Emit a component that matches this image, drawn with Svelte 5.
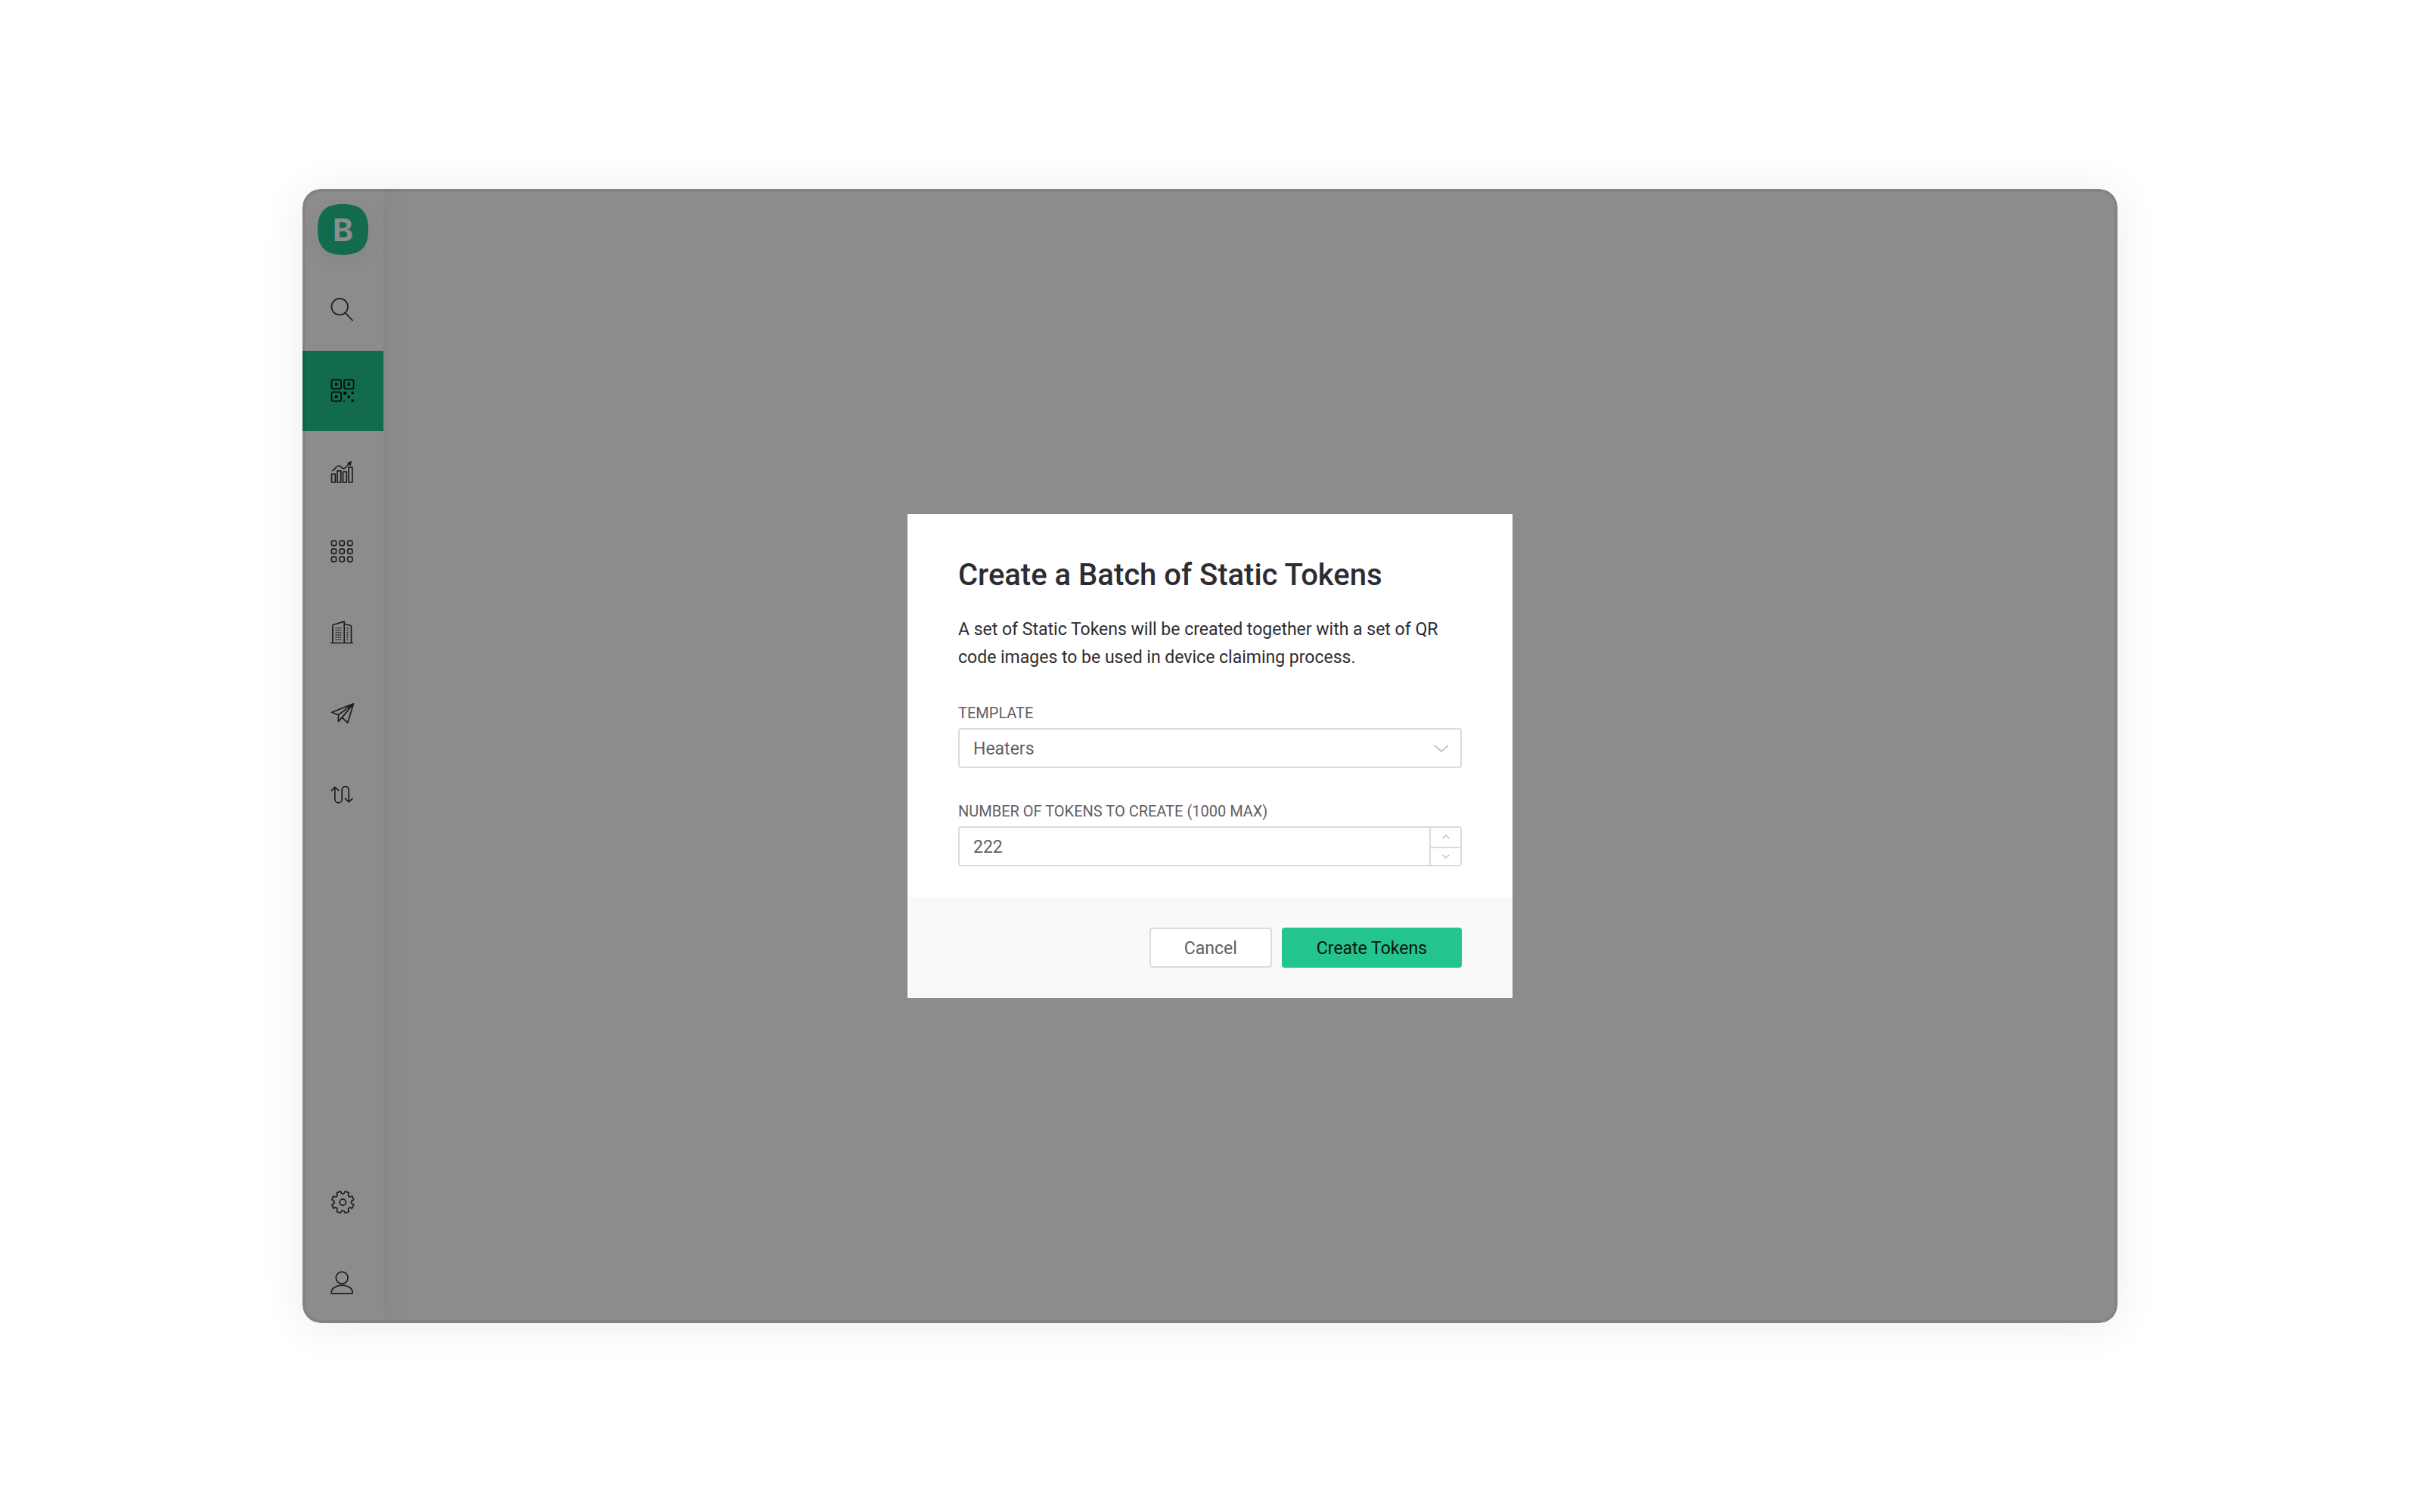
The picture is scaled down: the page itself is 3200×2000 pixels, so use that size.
<script>
  let template = $state('Heaters');
  let count = $state(222);

  const step = (delta) => {
    count = Math.min(1000, Math.max(1, Number(count) + delta));
  };

  const gridStops = [4.5, 15.2, 25.8];
  const windowRows = [9.8, 12.8, 15.9, 19, 22.1, 25.1];
  const windowCols = [7.5, 10.5, 13.5, 22.5];

  // Eight-toothed cog: concave notches joined by slightly bowed teeth.
  function cogPath(cx, cy, r) {
    const at = (deg, radius) => {
      const a = ((deg - 90) * Math.PI) / 180;
      return `${(cx + radius * Math.cos(a)).toFixed(2)} ${(cy + radius * Math.sin(a)).toFixed(2)}`;
    };
    let d = `M${at(-11, r)}`;
    for (let k = 0; k < 8; k++) {
      const a = k * 45;
      d += `C${at(a - 10, r - 3.8)} ${at(a + 10, r - 3.8)} ${at(a + 11, r)}`;
      d += `Q${at(a + 13, r + 1.2)} ${at(a + 22.5, r + 0.3)}`;
      d += `Q${at(a + 32, r + 1.2)} ${at(a + 34, r)}`;
    }
    return d + 'Z';
  }
  const cog = cogPath(16.3, 16.2, 14.1);
</script>

<div class="page">
  <div class="window">
    <aside class="sidebar">
      <a class="logo" href="#home" aria-label="Home">
        <svg viewBox="0 0 68 68" aria-hidden="true">
          <path d="M34 0C58 0 68 10 68 34S58 68 34 68 0 58 0 34 10 0 34 0Z" />
        </svg>
        <span>B</span>
      </a>
      <nav class="primary" aria-label="Main">
        <a href="#search" aria-label="Search">
          <svg class="icon" viewBox="0 0 32 32"><circle cx="12.2" cy="11.7" r="10.8" /><path d="M19.4 19.6 29.2 30" /></svg>
        </a>
        <a class="active" href="#tokens" aria-label="Static tokens" aria-current="page">
          <svg class="icon" viewBox="0 0 32 32">
            <rect x="1.5" y="1.3" width="12.6" height="12" rx="2" />
            <rect x="18" y="1.3" width="12.6" height="12" rx="2" />
            <rect x="1.5" y="17.6" width="12.6" height="12" rx="2" />
            <path
              class="solid"
              d="M5.9 5.6h3.4v3.4H5.9zM22.5 5.6h3.4v3.4h-3.4zM5.9 22h3.4v3.4H5.9zM17.3 17h4v4h-4zM27.6 17h3.2v3.2h-3.2zM22.5 22.2h3.4v3.2h-3.4zM17.2 28.8h1.7v1.7h-1.7zM27.6 27.4h3.2v3.2h-3.2z"
            />
          </svg>
        </a>
        <a href="#analytics" aria-label="Analytics">
          <svg class="icon" viewBox="0 0 32 32">
            <path d="M1.5 19h4.8v11H1.5zM9 14.8h4.8V30H9zM16.5 16h4.8v14h-4.8zM24 10.1h4.9V30H24z" />
            <path d="M2.8 14.6C6 12.4 9 8 11.4 8c2.4 0 3.6 4.2 6.2 3.9C20 11.5 22.5 7 26 4" />
            <path class="solid" d="M28 1.5 21.6 4.4 27 8.2z" />
          </svg>
        </a>
        <a href="#apps" aria-label="Templates">
          <svg class="icon" viewBox="0 0 32 32">
            {#each gridStops as y}
              {#each gridStops as x}
                <rect x={x - 3.1} y={y - 3.1} width="6.2" height="6.2" rx="1.6" />
              {/each}
            {/each}
          </svg>
        </a>
        <a href="#organizations" aria-label="Organizations">
          <svg class="icon" viewBox="0 0 32 32">
            <path d="M.8 29.5h28.7M2.9 29.5V6.8q0-1.2 1.2-1.5L18.2 1.1V29.5M18.2 4.2l7.9 2.1q1.4.4 1.4 1.7V29.5" />
            {#each windowRows as y}
              {#each windowCols as x}
                <rect class="solid soft" x={x - 0.9} y={y - 0.9} width="1.8" height="1.8" />
              {/each}
            {/each}
          </svg>
        </a>
        <a href="#campaigns" aria-label="Campaigns">
          <svg class="icon" viewBox="0 0 32 32">
            <path d="M30.4 2.9 1.6 14.2l8.9 3.3v9l4.7-5.4 7.6 6.9zM30.4 2.9 10.5 17.5M30.4 2.9 15.2 21.1" />
          </svg>
        </a>
        <a href="#automations" aria-label="Automations">
          <svg class="icon" viewBox="0 0 32 32">
            <path d="M5.8 6.3V22.2a4.7 4.7 0 0 0 9.4 0V9.8a4.5 4.5 0 0 1 9 0V25.6M1.5 10.7 5.8 6.2l4.9 4.5M19.3 21.4l4.9 4.4 4.9-4.4" />
          </svg>
        </a>
      </nav>
      <nav class="secondary" aria-label="Account">
        <a href="#settings" aria-label="Settings">
          <svg class="icon" viewBox="0 0 32 32"><path d={cog} /><circle cx="16.3" cy="16.2" r="4.1" /></svg>
        </a>
        <a href="#profile" aria-label="Profile">
          <svg class="icon" viewBox="0 0 32 32">
            <circle cx="15.2" cy="9.2" r="7.9" />
            <path d="M2.2 30.2q-1.1 0-1.1-1.2C1.1 22.8 7.8 19.2 15.2 19.2S29.2 22.8 29.2 29q0 1.2-1 1.2z" />
          </svg>
        </a>
      </nav>
    </aside>
    <main></main>

    <div class="overlay">
      <form class="modal" role="dialog" aria-modal="true" aria-labelledby="title" onsubmit={(e) => e.preventDefault()}>
        <div class="content">
          <h1 id="title">Create a Batch of Static Tokens</h1>
          <p>A set of Static Tokens will be created together with a set of QR code images to be used in device claiming process.</p>

          <div class="field">
            <label for="template">TEMPLATE</label>
            <div class="control">
              <select id="template" bind:value={template}>
                <option>Heaters</option>
                <option>Thermostats</option>
              </select>
              <svg class="chevron" viewBox="0 0 20 10" aria-hidden="true"><path d="M1 1l9 8 9-8" /></svg>
            </div>
          </div>

          <div class="field">
            <label for="count">NUMBER OF TOKENS TO CREATE (1000 MAX)</label>
            <div class="control">
              <input id="count" type="number" min="1" max="1000" bind:value={count} />
              <div class="stepper">
                <button type="button" aria-label="Increase" onclick={() => step(1)}>
                  <svg viewBox="0 0 10 6" aria-hidden="true"><path d="M.5 5.2 5 1l4.5 4.2" /></svg>
                </button>
                <button type="button" aria-label="Decrease" onclick={() => step(-1)}>
                  <svg viewBox="0 0 10 6" aria-hidden="true"><path d="M.5.8 5 5 9.5.8" /></svg>
                </button>
              </div>
            </div>
          </div>
        </div>
        <footer>
          <button class="btn" type="button">Cancel</button>
          <button class="btn accent" type="submit">Create Tokens</button>
        </footer>
      </form>
    </div>
  </div>
</div>

<style>
  :global(body) {
    background: #fff;
  }
  .page,
  .page * {
    box-sizing: border-box;
  }
  .page {
    display: flex;
    min-height: 100vh;
    padding: 250px 12.5%;
    font-family: Roboto, 'Liberation Sans', sans-serif;
    font-size: 23px;
    color: #2c2c33;
  }
  .window {
    position: relative;
    display: flex;
    flex: 1;
    border-radius: 24px;
    overflow: hidden;
    background: #fff;
    box-shadow: 0 4px 58px rgba(0, 0, 0, 0.08);
  }
  .sidebar {
    display: flex;
    flex-direction: column;
    flex: none;
    width: 107px;
    box-shadow: 0 0 34px rgba(0, 0, 0, 0.09);
  }
  main {
    flex: 1;
  }
  .logo {
    display: grid;
    place-items: center;
    height: 107px;
    color: #fff;
    text-decoration: none;
  }
  .logo > * {
    grid-area: 1 / 1;
  }
  .logo svg {
    width: 67px;
    height: 67px;
    fill: #24c48e;
    filter: drop-shadow(0 8px 10px rgba(0, 0, 0, 0.05));
  }
  .logo span {
    position: relative;
    font-family: Inter, 'Liberation Sans', sans-serif;
    font-size: 41px;
    font-weight: 700;
    line-height: 48px;
  }
  nav {
    display: grid;
    grid-auto-rows: 1fr;
  }
  .primary {
    height: 747px;
  }
  .secondary {
    height: 214px;
    margin-top: auto;
  }
  nav a {
    display: flex;
    align-items: center;
    justify-content: center;
    padding-right: 1px;
    color: #36363e;
  }
  nav .active {
    background: #24c48e;
    color: #08120f;
  }
  .icon {
    width: 32px;
    height: 32px;
    fill: none;
    stroke: currentColor;
    stroke-width: 1.7;
    stroke-linecap: round;
    stroke-linejoin: round;
  }
  .icon .solid {
    fill: currentColor;
    stroke: none;
  }
  .icon .soft {
    opacity: 0.8;
  }
  .overlay {
    position: absolute;
    inset: 0;
    display: flex;
    align-items: center;
    justify-content: center;
    border-radius: 24px;
    background: rgba(0, 0, 0, 0.45);
    box-shadow: inset 0 0 0 4px rgba(0, 0, 0, 0.06);
  }
  .modal {
    width: 800px;
    background: #fff;
  }
  .content {
    padding: 57px 67px 41px;
  }
  h1 {
    margin: 0 0 30px;
    font-size: 40px;
    font-weight: 500;
    line-height: 47px;
  }
  p {
    margin: 0 0 35px;
    line-height: 37px;
  }
  .field + .field {
    margin-top: 37px;
  }
  label {
    display: block;
    font-size: 20px;
    line-height: 40px;
    color: #606065;
  }
  .control {
    position: relative;
    display: flex;
    height: 53px;
    border: 2px solid #dbdbdc;
    border-radius: 4px;
    background: #fff;
    overflow: hidden;
  }
  select,
  input {
    flex: 1;
    min-width: 0;
    margin: 0;
    padding: 2px 18px 0;
    border: 0;
    outline: 0;
    background: transparent;
    appearance: none;
    font: inherit;
    color: #606065;
  }
  input {
    appearance: textfield;
  }
  input::-webkit-inner-spin-button,
  input::-webkit-outer-spin-button {
    appearance: none;
    margin: 0;
  }
  .control svg {
    fill: none;
    stroke: #bfbfc1;
    stroke-width: 1.7;
  }
  .chevron {
    position: absolute;
    top: 20px;
    right: 15px;
    width: 20px;
    height: 10px;
    pointer-events: none;
  }
  .stepper {
    display: grid;
    grid-template-rows: 1fr 1fr;
    width: 41px;
    border-left: 2px solid #dbdbdc;
  }
  .stepper button {
    display: flex;
    align-items: center;
    justify-content: center;
    padding: 0;
    border: 0;
    background: #fff;
  }
  .stepper button + button {
    border-top: 2px solid #dbdbdc;
  }
  .stepper svg {
    width: 10px;
    height: 6px;
    stroke-width: 1.3;
  }
  footer {
    display: flex;
    justify-content: flex-end;
    gap: 13px;
    padding: 40px 67px;
    background: #f9f9f9;
  }
  .btn {
    height: 53px;
    padding: 2px 44px 0;
    border: 2px solid #dbdbdc;
    border-radius: 4px;
    background: #fff;
    font: inherit;
    color: #606065;
  }
  .accent {
    border-color: #24c48e;
    background: #24c48e;
    color: #08120f;
  }
</style>
